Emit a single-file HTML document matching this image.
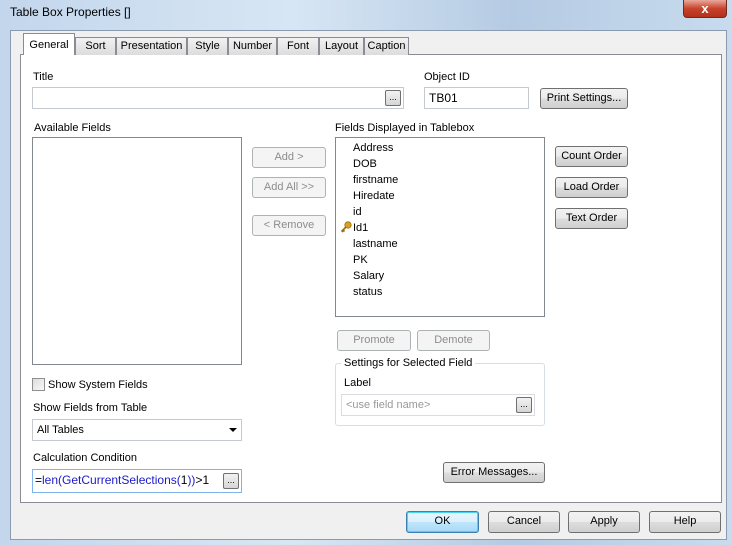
<!DOCTYPE html>
<html><head><meta charset="utf-8"><style>
*{box-sizing:border-box;margin:0;padding:0}
body{width:732px;height:545px;overflow:hidden;font-family:"Liberation Sans",sans-serif;font-size:11px;color:#000;background:#b9cfe6;position:relative}
.a{position:absolute}
.frame{left:0;top:0;width:732px;height:545px;background:linear-gradient(90deg,#c3d6ec,#d7e6f4 40%,#b5cbe3 70%,#c8dbee)}
.client{left:10px;top:30px;width:717px;height:510px;background:#f0f0f0;border:1px solid #8a9bb0}
.panel{left:20px;top:54px;width:702px;height:449px;background:#fff;border:1px solid #898c95}
.tab{top:37px;height:18px;background:linear-gradient(#f2f2f2,#dcdcdc);border:1px solid #898c95;border-bottom:none;text-align:center;line-height:17px}
.tab.sel{top:33px;height:22px;background:#fff;line-height:22px;z-index:2}
.inp{background:#fff;border:1px solid #c5c9d0;height:22px;padding:3px 4px;line-height:15px}
.btn{border:1px solid #707070;border-radius:3px;background:linear-gradient(#f2f2f2,#ebebeb 50%,#dddddd 51%,#cfcfcf);text-align:center;line-height:19px;height:21px}
.dis{border:1px solid #adb2b5;background:#f4f4f4;color:#8d8d8d;border-radius:3px;text-align:center;line-height:19px;height:21px}
.list{background:#fff;border:1px solid #828790}
.dots{width:16px;height:16px;border:1px solid #707070;border-radius:2px;background:linear-gradient(#f2f2f2,#d6d6d6);font-size:9px;text-align:center;line-height:12px}
</style></head><body>
<div class="a frame"></div>
<div class="a" style="left:10px;top:5px;font-size:12px">Table Box Properties []</div>
<div class="a" style="left:683px;top:0;width:44px;height:18px;background:linear-gradient(#e9a99c,#c8432b 50%,#b5301b);border:1px solid #6d2a22;border-top:none;border-radius:0 0 4px 4px;color:#fff;font-weight:bold;text-align:center;line-height:17px;font-size:13px">x</div>
<div class="a client"></div>
<div class="a panel"></div>
<div class="a tab sel" style="left:23px;width:52px">General</div>
<div class="a tab" style="left:75px;width:41px">Sort</div>
<div class="a tab" style="left:116px;width:71px">Presentation</div>
<div class="a tab" style="left:187px;width:41px">Style</div>
<div class="a tab" style="left:228px;width:49px">Number</div>
<div class="a tab" style="left:277px;width:42px">Font</div>
<div class="a tab" style="left:319px;width:45px">Layout</div>
<div class="a tab" style="left:364px;width:45px">Caption</div>

<div class="a" style="left:33px;top:71px">Title</div>
<div class="a inp" style="left:32px;top:87px;width:372px"></div>
<div class="a dots" style="left:385px;top:90px">...</div>
<div class="a" style="left:424px;top:71px">Object ID</div>
<div class="a inp" style="left:424px;top:87px;width:105px;font-size:12px">TB01</div>
<div class="a btn" style="left:540px;top:88px;width:88px">Print Settings...</div>

<div class="a" style="left:34px;top:122px">Available Fields</div>
<div class="a list" style="left:32px;top:137px;width:210px;height:228px"></div>
<div class="a dis" style="left:252px;top:147px;width:74px">Add &gt;</div>
<div class="a dis" style="left:252px;top:177px;width:74px">Add All &gt;&gt;</div>
<div class="a dis" style="left:252px;top:215px;width:74px">&lt; Remove</div>

<div class="a" style="left:335px;top:122px">Fields Displayed in Tablebox</div>
<div class="a list" style="left:335px;top:137px;width:210px;height:180px"></div>
<div class="a" style="left:353px;top:140px;line-height:16px">Address<br>DOB<br>firstname<br>Hiredate<br>id<br>Id1<br>lastname<br>PK<br>Salary<br>status</div>
<svg class="a" style="left:340px;top:221px" width="12" height="12" viewBox="0 0 12 12"><circle cx="8" cy="4" r="3.2" fill="#d9a21c" stroke="#9a6d0a" stroke-width="0.8"/><path d="M6 6 L1.5 10.5 M3 9 L4.5 10.5 M2 10 L3 11" stroke="#9a6d0a" stroke-width="1.6" fill="none"/></svg>
<div class="a btn" style="left:555px;top:146px;width:73px">Count Order</div>
<div class="a btn" style="left:555px;top:177px;width:73px">Load Order</div>
<div class="a btn" style="left:555px;top:208px;width:73px">Text Order</div>
<div class="a dis" style="left:337px;top:330px;width:74px">Promote</div>
<div class="a dis" style="left:417px;top:330px;width:73px">Demote</div>

<div class="a" style="left:335px;top:363px;width:210px;height:63px;border:1px solid #d5dfe5;border-radius:3px"></div>
<div class="a" style="left:341px;top:357px;background:#fff;padding:0 3px">Settings for Selected Field</div>
<div class="a" style="left:344px;top:377px">Label</div>
<div class="a inp" style="left:341px;top:394px;width:194px;color:#999;border-color:#d9dde2">&lt;use field name&gt;</div>
<div class="a dots" style="left:516px;top:397px">...</div>

<div class="a" style="left:32px;top:378px;width:13px;height:13px;border:1px solid #8f8f8f;background:linear-gradient(135deg,#dcdcdc,#fafafa)"></div>
<div class="a" style="left:48px;top:379px">Show System Fields</div>
<div class="a" style="left:33px;top:402px">Show Fields from Table</div>
<div class="a inp" style="left:32px;top:419px;width:210px">All Tables</div>
<div class="a" style="left:229px;top:428px;width:0;height:0;border-left:4px solid transparent;border-right:4px solid transparent;border-top:4px solid #000"></div>
<div class="a" style="left:33px;top:452px">Calculation Condition</div>
<div class="a inp" style="left:32px;top:469px;width:210px;height:24px;border-color:#7eb4ea;color:#1a1acc;padding-left:2px;font-size:12px"><span style="color:#000">=</span>len(GetCurrentSelections(<span style="color:#000">1</span>))<span style="color:#000">&gt;1</span></div>
<div class="a dots" style="left:223px;top:473px">...</div>
<div class="a btn" style="left:443px;top:462px;width:102px">Error Messages...</div>

<div class="a btn" style="left:406px;top:511px;width:73px;height:22px;border-color:#3c7fb1;box-shadow:inset 0 0 0 1px #48d4f6;background:linear-gradient(#eaf6fd,#d9f0fc 50%,#bee6fd 51%,#a7d9f5)">OK</div>
<div class="a btn" style="left:488px;top:511px;width:72px;height:22px">Cancel</div>
<div class="a btn" style="left:568px;top:511px;width:72px;height:22px">Apply</div>
<div class="a btn" style="left:649px;top:511px;width:72px;height:22px">Help</div>
</body></html>
